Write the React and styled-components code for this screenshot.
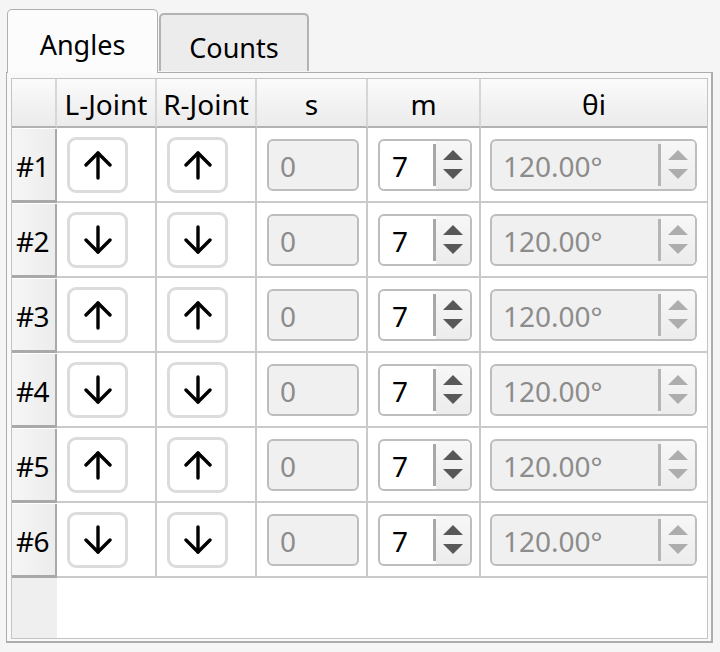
import React from "react";
import styled, { createGlobalStyle, css } from "styled-components";

const Global = createGlobalStyle`
  html, body {
    margin: 0;
    padding: 0;
    background: #f5f5f5;
    font-family: "Noto Sans", "Open Sans", sans-serif;
  }
`;

const Page = styled.div`
  width: 720px;
  height: 652px;
  padding: 8px 7px 0 6px;
  box-sizing: border-box;
`;

const TabBar = styled.div`
  display: flex;
  align-items: flex-end;
  height: 64px;
  padding-left: 1px;
  position: relative;
  z-index: 1;
`;

const Tab = styled.div`
  box-sizing: border-box;
  width: 150px;
  height: 58px;
  margin-right: 1px;
  border: 2px solid #b3b3b3;
  border-bottom: none;
  border-radius: 5px 5px 0 0;
  background: #ececec;
  display: flex;
  align-items: center;
  justify-content: center;
  font-size: 27px;
  color: #000;
  margin-bottom: 1px;
  padding-top: 8px;

  ${(p) =>
    p.selected &&
    css`
      width: 151px;
      height: 64px;
      border: 1px solid #b0b0b0;
      border-bottom: none;
      background: #fcfcfc;
      margin-bottom: -1px;
      padding-top: 6px;
    `}
`;

const Pane = styled.div`
  box-sizing: border-box;
  height: 571px;
  border: 1px solid #adadad;
  border-right-width: 2px;
  border-bottom-width: 2px;
  background: #f9f9f9;
  padding: 5px 3px 2px 4px;
`;

const Table = styled.div`
  box-sizing: border-box;
  height: 100%;
  border: 1px solid #c4c4c4;
  background: #fff;
  display: grid;
  grid-template-columns: 45px 100px 100px 111px 113px 1fr;
  grid-template-rows: 49px repeat(6, 75px) 1fr;
`;

const HeadCell = styled.div`
  box-sizing: border-box;
  background: linear-gradient(#fbfbfb, #ebebeb);
  border-bottom: 2px solid #b2b2b2;
  border-right: ${(p) => (p.last ? "none" : "2px solid #d6d6d6")};
  display: flex;
  align-items: center;
  justify-content: center;
  font-size: 28px;
  white-space: nowrap;
  overflow: hidden;
  padding-top: 2px;
`;

const RowHead = styled.div`
  box-sizing: border-box;
  background: linear-gradient(90deg, #f6f6f6, #ececec);
  border-right: 2px solid #a9a9a9;
  border-bottom: 3px solid #a9a9a9;
  display: flex;
  align-items: center;
  padding: 3px 0 0 4px;
  font-size: 28px;
  margin-top: 1px;
  letter-spacing: -0.5px;
`;

const Cell = styled.div`
  box-sizing: border-box;
  border-right: ${(p) => (p.last ? "none" : "2px solid #cacaca")};
  border-bottom: 2px solid #cacaca;
  display: flex;
  align-items: center;
  padding-left: ${(p) => p.pad || 10}px;
`;

const Filler = styled.div`
  background: ${(p) => (p.gray ? "#efefef" : "#fff")};
  grid-column: ${(p) => (p.gray ? "1" : "2 / -1")};
`;

const Toggle = styled.button`
  box-sizing: border-box;
  width: 61px;
  height: 56px;
  border: 3px solid #dcdcdc;
  border-radius: 9px;
  background: #fff;
  display: flex;
  align-items: center;
  justify-content: center;
  padding: 0;
`;

const Field = styled.div`
  box-sizing: border-box;
  width: 92px;
  height: 52px;
  border: 2px solid #bdbdbd;
  border-radius: 6px;
  background: #f0f0f0;
  color: #8c8c8c;
  font-size: 28px;
  display: flex;
  align-items: center;
  padding: 2px 0 0 11px;
`;

const Spin = styled.div`
  box-sizing: border-box;
  width: ${(p) => p.w}px;
  height: 52px;
  border: 2px solid #bdbdbd;
  border-radius: 6px;
  background: ${(p) => (p.disabled ? "#f0f0f0" : "#fff")};
  display: flex;
  overflow: hidden;
`;

const SpinText = styled.div`
  flex: 1;
  display: flex;
  align-items: center;
  padding: 2px 0 0 ${(p) => (p.disabled ? 11 : 12)}px;
  font-size: 28px;
  color: ${(p) => (p.disabled ? "#8c8c8c" : "#000")};
  border-right: 3px solid ${(p) => (p.disabled ? "#b5b5b5" : "#a8a8a8")};
  margin: 3px 0;
`;

const SpinArrows = styled.div`
  width: 34px;
  display: flex;
  flex-direction: column;
  align-items: center;
  justify-content: center;
  gap: 9px;
  background: linear-gradient(#f7f7f7, #ececec);
`;

const Tri = styled.div`
  width: 0;
  height: 0;
  border-left: 10px solid transparent;
  border-right: 10px solid transparent;
  ${(p) =>
    p.down
      ? css`border-top: 10px solid ${p.color};`
      : css`border-bottom: 10px solid ${p.color};`}
`;

function Arrow({ down }) {
  return (
    <svg width="28" height="30" viewBox="0 0 28 30">
      <g
        fill="none"
        stroke="#000"
        strokeWidth="3.4"
        strokeLinecap="round"
        strokeLinejoin="round"
        transform={down ? "rotate(180 14 15)" : undefined}
      >
        <path d="M14 28V3" />
        <path d="M2 15L14 3L26 15" />
      </g>
    </svg>
  );
}

function Spinner({ value, width, disabled }) {
  const c = disabled ? "#adadad" : "#585858";
  return (
    <Spin w={width} disabled={disabled}>
      <SpinText disabled={disabled}>{value}</SpinText>
      <SpinArrows>
        <Tri color={c} />
        <Tri down color={c} />
      </SpinArrows>
    </Spin>
  );
}

const rows = [1, 2, 3, 4, 5, 6].map((n) => ({ n, down: n % 2 === 0 }));

export default function App() {
  return (
    <Page>
      <Global />
      <TabBar>
        <Tab selected>Angles</Tab>
        <Tab>Counts</Tab>
      </TabBar>
      <Pane>
        <Table>
          <HeadCell />
          <HeadCell>L-Joint</HeadCell>
          <HeadCell>R-Joint</HeadCell>
          <HeadCell>s</HeadCell>
          <HeadCell>m</HeadCell>
          <HeadCell last>θi</HeadCell>
          {rows.map((r) => (
            <React.Fragment key={r.n}>
              <RowHead>#{r.n}</RowHead>
              <Cell>
                <Toggle>
                  <Arrow down={r.down} />
                </Toggle>
              </Cell>
              <Cell>
                <Toggle>
                  <Arrow down={r.down} />
                </Toggle>
              </Cell>
              <Cell>
                <Field>0</Field>
              </Cell>
              <Cell>
                <Spinner value="7" width={94} />
              </Cell>
              <Cell last pad={9}>
                <Spinner value="120.00°" width={207} disabled />
              </Cell>
            </React.Fragment>
          ))}
          <Filler gray />
          <Filler />
        </Table>
      </Pane>
    </Page>
  );
}
